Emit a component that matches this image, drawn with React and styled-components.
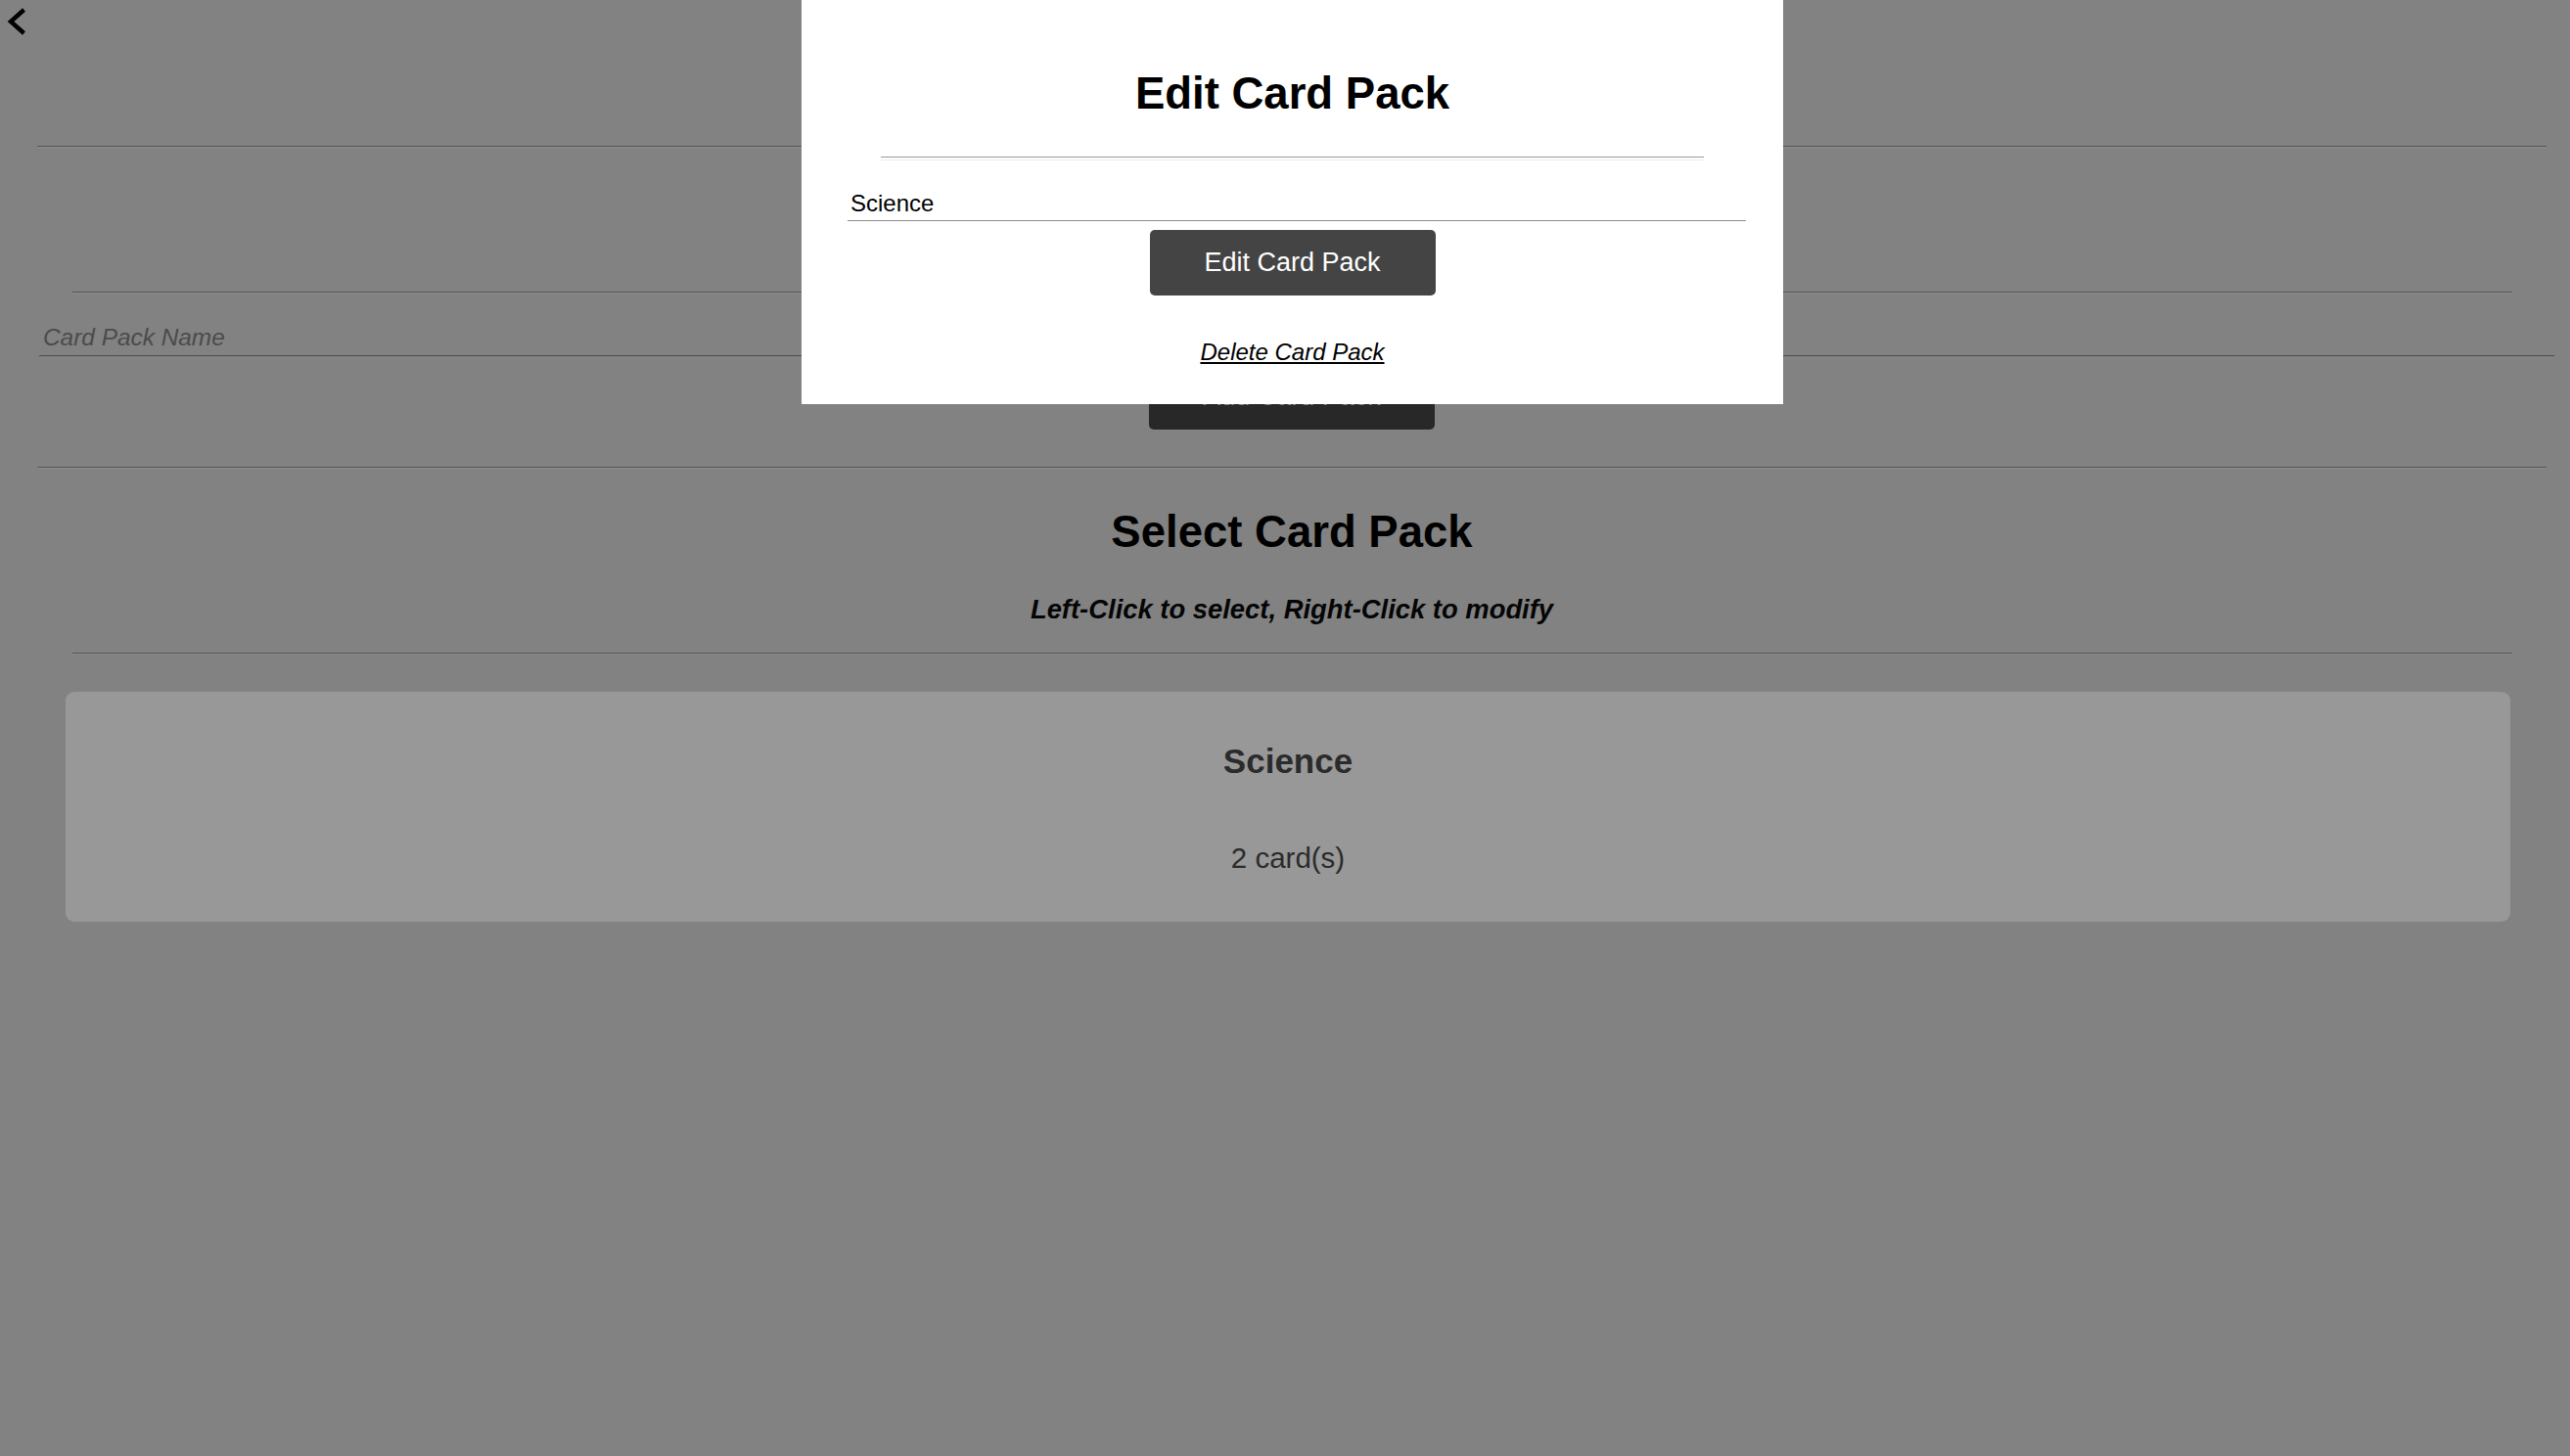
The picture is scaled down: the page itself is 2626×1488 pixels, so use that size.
import React from "react";
import styled, { createGlobalStyle } from "styled-components";

const GlobalStyle = createGlobalStyle`
  html, body {
    margin: 0;
    height: 100%;
  }

  body {
    background: #828282;
    font-family: "Liberation Sans", Arial, Helvetica, sans-serif;
    overflow: hidden;
  }

  * {
    box-sizing: border-box;
  }
`;

const App = () => {
  return (
    <Page>
      <GlobalStyle />
      <TopBar>
        <BackButton aria-label="Back">
          <svg width="32" height="40" viewBox="0 0 32 40">
            <polyline
              points="24.5,10 11,22 24.5,34"
              fill="none"
              stroke="#000"
              strokeWidth="4.4"
              strokeLinejoin="miter"
            />
          </svg>
        </BackButton>
      </TopBar>

      <Content>
        <Divider $top={109} />
        <SectionTitle $top={46} $bottom={47}>
          Create Card Pack
        </SectionTitle>
        <Divider $inset />
        <NameInput placeholder="Card Pack Name" />
        <ActionButton $dimmed $top={8}>
          Add Card Pack
        </ActionButton>

        <Divider $top={38} />
        <SectionTitle $top={38}>Select Card Pack</SectionTitle>
        <Hint>Left-Click to select, Right-Click to modify</Hint>
        <Divider $inset $top={29} />

        <PackCard>
          <PackName>Science</PackName>
          <PackCount>2 card(s)</PackCount>
        </PackCard>
      </Content>

      <Overlay>
        <Modal>
          <ModalTitle>Edit Card Pack</ModalTitle>
          <ModalDivider />
          <ModalInput defaultValue="Science" />
          <ActionButton $top={9}>Edit Card Pack</ActionButton>
          <DeleteLink href="#">Delete Card Pack</DeleteLink>
        </Modal>
      </Overlay>
    </Page>
  );
};

const Page = styled.div`
  min-height: 100vh;
  position: relative;
`;

const TopBar = styled.div`
  height: 40px;
  display: flex;
  align-items: flex-start;
`;

const BackButton = styled.button`
  padding: 0;
  border: none;
  background: none;
  display: block;
  cursor: pointer;

  svg {
    display: block;
  }
`;

const Content = styled.div`
  padding: 0 24px 0 38px;
  display: flex;
  flex-direction: column;
`;

const Divider = styled.hr`
  height: 2px;
  margin: ${(p) => p.$top || 0}px ${(p) => (p.$inset ? 35 : 0)}px 0
    ${(p) => (p.$inset ? 36 : 0)}px;
  border: 0;
  border-top: 1px solid #545454;
  border-bottom: 1px solid #8d8d8d;
`;

const SectionTitle = styled.h2`
  margin: ${(p) => p.$top || 0}px 0 ${(p) => p.$bottom || 0}px;
  font-size: 45.5px;
  line-height: 54px;
  font-weight: 700;
  text-align: center;
  color: #000;
`;

const Hint = styled.p`
  margin: 37px 0 0;
  font-size: 27.4px;
  line-height: 30px;
  font-weight: 700;
  font-style: italic;
  text-align: center;
  color: #050505;
`;

const NameInput = styled.input`
  margin: 27px -8px 0 2px;
  height: 37px;
  padding: 0 4px;
  border: none;
  border-bottom: 1px solid #4d4d4d;
  background: transparent;
  font-family: inherit;
  font-size: 24.4px;
  outline: none;

  &::placeholder {
    color: #4b4b4b;
    font-style: italic;
  }
`;

const ActionButton = styled.button`
  display: block;
  width: 292px;
  height: 67px;
  margin: ${(p) => p.$top || 0}px auto 0;
  padding: 0;
  border: none;
  border-radius: 5px;
  background: ${(p) => (p.$dimmed ? "#282828" : "#444444")};
  color: ${(p) => (p.$dimmed ? "#848484" : "#ffffff")};
  font-family: inherit;
  font-size: 27px;
  line-height: 67px;
  cursor: pointer;
`;

const PackCard = styled.div`
  margin: 38px 37px 0 29px;
  padding: 50px 0 49px;
  border-radius: 9px;
  background: #989898;
  text-align: center;
  color: #2b2b2b;
  cursor: pointer;
`;

const PackName = styled.h3`
  margin: 0;
  font-size: 35px;
  line-height: 42px;
  font-weight: 700;
`;

const PackCount = styled.p`
  margin: 62px 0 0;
  font-size: 29.5px;
  line-height: 32px;
`;

const Overlay = styled.div`
  position: fixed;
  inset: 0;
  display: flex;
  justify-content: center;
  align-items: flex-start;
  padding-left: 15px;
`;

const Modal = styled.div`
  width: 1003px;
  padding: 69px 0 39px;
  background: #ffffff;
  display: flex;
  flex-direction: column;
  align-items: stretch;
`;

const ModalTitle = styled.h2`
  margin: 0;
  font-size: 45.5px;
  line-height: 54px;
  font-weight: 700;
  text-align: center;
  color: #000;
`;

const ModalDivider = styled.hr`
  height: 4px;
  margin: 37px 81px 0;
  border: 0;
  border-top: 1px solid #9a9a9a;
  border-bottom: 1px solid #ebebeb;
`;

const ModalInput = styled.input`
  margin: 26px 38px 0 47px;
  height: 36px;
  padding: 0 3px;
  border: none;
  border-bottom: 1px solid #8a8a8a;
  background: transparent;
  font-family: inherit;
  font-size: 24px;
  color: #000;
  outline: none;
`;

const DeleteLink = styled.a`
  align-self: center;
  margin-top: 44px;
  font-size: 24px;
  line-height: 28px;
  font-style: italic;
  color: #000;
  text-decoration: underline;
`;

export default App;
